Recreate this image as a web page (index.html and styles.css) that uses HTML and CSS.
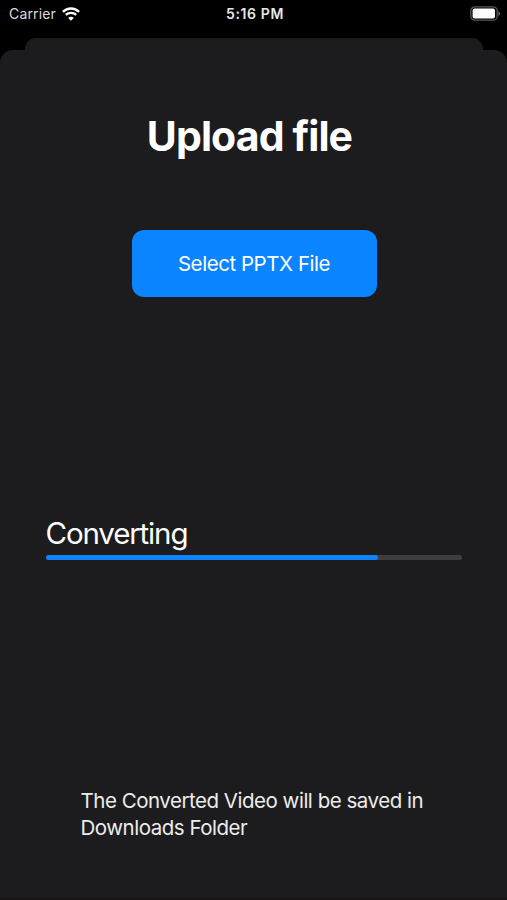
FILE: index.html
```
<!DOCTYPE html>
<html lang="en">
<head>
    <meta charset="UTF-8">
    <meta name="viewport" content="width=device-width, initial-scale=1.0">
    <title>Upload file</title>
    <link rel="stylesheet" href="styles.css">
</head>
<body>
    <!-- Status bar -->
    <header class="status-bar">
        <div class="carrier">
            <span class="carrier-name">Carrier</span>
            <svg class="wifi" width="18" height="14" viewBox="0 0 18 14" fill="none" stroke="#fff">
                <path d="M0.9 4.9C5.4 0.3 12.6 0.3 17.1 4.9" stroke-width="2.4"/>
                <path d="M3.8 7.9C6.7 5.1 11.3 5.1 14.2 7.9" stroke-width="2.2"/>
                <path d="M9 13.8L6.2 10.9C7.8 9.5 10.2 9.5 11.8 10.9Z" fill="#fff" stroke="none"/>
            </svg>
        </div>
        <span class="time">5:16 PM</span>
        <svg class="battery" width="31" height="15" viewBox="0 0 31 15">
            <rect x="0.8" y="0.8" width="26.4" height="13.4" rx="4" fill="#000" stroke="#58585a" stroke-width="1.3"/>
            <rect x="2.6" y="2.6" width="22.4" height="9.8" rx="2" fill="#fff"/>
            <path d="M28.4 5.2C30.6 6 30.6 9 28.4 9.8Z" fill="#6b6b6d"/>
        </svg>
    </header>

    <!-- Edge of the sheet underneath -->
    <div class="sheet-back"></div>

    <main class="sheet">
        <h1 class="title">Upload file</h1>
        <button class="select-button">Select PPTX File</button>

        <div class="progress">
            <div class="progress-label">Converting</div>
            <div class="progress-track">
                <div class="progress-fill" style="width: 80%"></div>
            </div>
        </div>

        <p class="note">The Converted Video will be saved in Downloads Folder</p>
    </main>
</body>
</html>
```
FILE: styles.css
```
* {
    box-sizing: border-box;
}
body {
    margin: 0;
    height: 900px;
    display: flex;
    flex-direction: column;
    overflow: hidden;
    background-color: #000;
    color: #fff;
    font-family: Inter, 'Liberation Sans', sans-serif;
}
.status-bar {
    display: grid;
    grid-template-columns: 1fr auto 1fr;
    align-items: center;
    height: 38px;
    padding: 0 6px 11px 9px;
    font-size: 14px;
    line-height: 17px;
}
.carrier {
    display: flex;
    align-items: center;
    gap: 6px;
}
.carrier-name {
    color: #dcdcdc;
    letter-spacing: 0.15px;
}
.time {
    font-weight: 600;
    letter-spacing: 0.6px;
    color: #e8e8e8;
}
.battery {
    justify-self: end;
}
.sheet-back {
    height: 12px;
    margin: 0 24px 0 25px;
    border-radius: 11px 11px 0 0;
    background-color: #1b1b1b;
}
.sheet {
    flex: 1;
    display: flex;
    flex-direction: column;
    align-items: center;
    padding-top: 61px;
    border-radius: 13px 13px 0 0;
    border-bottom: 2px solid #171416;
    background-color: #1c1c1e;
}
.title {
    margin: 0;
    padding-right: 8px;
    font-size: 41px;
    line-height: 50px;
    font-weight: 700;
    letter-spacing: -0.9px;
}
.select-button {
    width: 245px;
    height: 67px;
    margin: 69px 0 0 1px;
    padding: 0;
    border: none;
    border-radius: 12px;
    background-color: #0a84ff;
    color: #fff;
    font-family: inherit;
    font-size: 20.5px;
    letter-spacing: -0.45px;
}
.progress {
    width: 416px;
    margin-top: 218px;
}
.progress-label {
    font-size: 29.5px;
    line-height: 36px;
    letter-spacing: -1.15px;
}
.progress-track {
    height: 5px;
    margin-top: 4px;
    border-radius: 3px;
    background-color: #3d3d3f;
}
.progress-fill {
    height: 100%;
    border-radius: 3px;
    background-color: #0f82f8;
}
.note {
    width: 346px;
    margin: 227px 0 0;
    font-size: 20.5px;
    line-height: 27px;
    letter-spacing: -0.48px;
    color: #ececec;
}
```
